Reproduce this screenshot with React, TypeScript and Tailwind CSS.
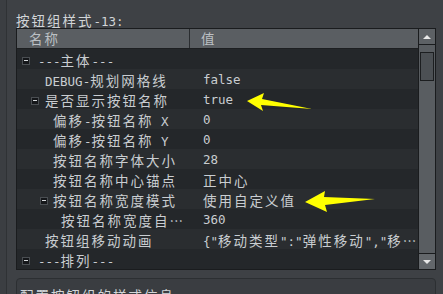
import React from "react";

// split text into latin / CJK runs so CJK gets the wider spacing of the original widget
function T({ s }: { s: string }) {
  const parts = s.split(/([\u2026\u3000-\u9fff\uff00-\uffef]+)/);
  return (
    <>
      {parts.map((p, i) =>
        /[\u2026\u3000-\u9fff\uff00-\uffef]/.test(p) ? (
          <span key={i} className="text-[13.5px] tracking-[2px] font-['Noto_Sans_CJK_SC',sans-serif]">
            {p}
          </span>
        ) : (
          <span key={i}>{p}</span>
        )
      )}
    </>
  );
}

interface Row {
  name: string;
  value: string;
  exp?: string; // margin class for the expander box
  text: string; // margin class for the label
}

const rows: Row[] = [
  { name: "---主体---", value: "", exp: "ml-[5px]", text: "ml-[8px]" },
  { name: "DEBUG-规划网格线", value: "false", text: "ml-[28px]" },
  { name: "是否显示按钮名称", value: "true", exp: "ml-[14px]", text: "ml-[6px]" },
  { name: "偏移-按钮名称 X", value: "0", text: "ml-[36px]" },
  { name: "偏移-按钮名称 Y", value: "0", text: "ml-[36px]" },
  { name: "按钮名称字体大小", value: "28", text: "ml-[36px]" },
  { name: "按钮名称中心锚点", value: "正中心", text: "ml-[36px]" },
  { name: "按钮名称宽度模式", value: "使用自定义值", exp: "ml-[23px]", text: "ml-[5px]" },
  { name: "按钮名称宽度自…", value: "360", text: "ml-[44px]" },
  { name: "按钮组移动动画", value: '{"移动类型":"弹性移动","移…', text: "ml-[28px]" },
  { name: "---排列---", value: "", exp: "ml-[5px]", text: "ml-[8px]" },
];

function Expander() {
  return (
    <div className="w-[8px] h-[8px] shrink-0 bg-[#15171a] border border-[#4a4e52] flex items-center justify-center">
      <div className="w-[4px] h-px bg-[#d4d7da]" />
    </div>
  );
}

export default function App() {
  return (
    <div className="relative w-[443px] h-[294px] overflow-hidden bg-[#3e4145] flex font-['DejaVu_Sans_Mono',monospace] text-[12.5px] text-[#c9cdd1]">
      <div className="w-[7px] shrink-0 bg-[#3b3e42] border-r border-[#2f3235]" />
      <div className="flex-1 flex flex-col pl-[9px] pr-[7px]">
        <div className="shrink-0 mt-[12px] h-[16px] leading-[16px] text-[#d2d5d8] whitespace-nowrap">
          <T s="按钮组样式-13:" />
        </div>

        {/* property table */}
        <div className="shrink-0 h-[242px] border border-[#1a1c1e] flex">
          <div className="flex-1 flex flex-col min-w-0">
            <div className="shrink-0 h-[20px] flex bg-[#5a5e62] border-b border-[#1d1f21] text-[#bcc0c4] leading-[19px]">
              <div className="w-[173px] pl-[12px] border-r border-[#2a2d30]">
                <T s="名称" />
              </div>
              <div className="pl-[11px]">
                <T s="值" />
              </div>
            </div>
            {rows.map((r, i) => (
              <div
                key={i}
                className={`h-[20px] shrink-0 flex items-center pt-[3px] whitespace-nowrap overflow-hidden ${
                  i % 2 === 0 ? "bg-[#24272a]" : "bg-[#2a2d30]"
                }`}
              >
                <div className="w-[174px] shrink-0 flex items-center">
                  {r.exp && (
                    <div className={r.exp}>
                      <Expander />
                    </div>
                  )}
                  <div className={r.text}>
                    <T s={r.name} />
                  </div>
                </div>
                <div className="pl-[12px]">
                  <T s={r.value} />
                </div>
              </div>
            ))}
          </div>

          {/* scrollbar */}
          <div className="w-[17px] shrink-0 border-l border-[#1a1c1e] bg-[#595d61] flex flex-col">
            <div className="shrink-0 h-[16px] border-b border-[#1a1c1e] bg-[#5d6165] flex items-center justify-center">
              <div className="w-0 h-0 border-l-[4px] border-r-[4px] border-b-[4px] border-l-transparent border-r-transparent border-b-[#e8e8e8]" />
            </div>
            <div className="flex-1 px-[1px] pt-[7px]">
              <div className="h-[29px] bg-[#4c5054] border border-[#1c1e20]" />
            </div>
            <div className="shrink-0 h-[16px] border-t border-[#1a1c1e] bg-[#63676b] flex items-center justify-center">
              <div className="w-0 h-0 border-l-[4px] border-r-[4px] border-t-[4px] border-l-transparent border-r-transparent border-t-[#e8e8e8]" />
            </div>
          </div>
        </div>

        {/* description box, cut off by the window edge as in the original */}
        <div className="shrink-0 mt-[8px] h-[40px] rounded-[4px] border border-[#2c2f32] bg-[#3a3d41] pl-[3px] pt-[8px] leading-[16px] text-[#d2d5d8] whitespace-nowrap">
          <T s="配置按钮组的样式信息" />
        </div>
      </div>

      {/* annotation arrows */}
      <svg className="absolute inset-0 pointer-events-none" width="443" height="294" viewBox="0 0 443 294">
        <polygon points="247,101 264,93 262,99 312,109 261,105 263,111" fill="#ffff00" />
        <polygon points="305,202 325,191 324,197 375,199 325,205 327,212" fill="#ffff00" />
      </svg>
    </div>
  );
}
